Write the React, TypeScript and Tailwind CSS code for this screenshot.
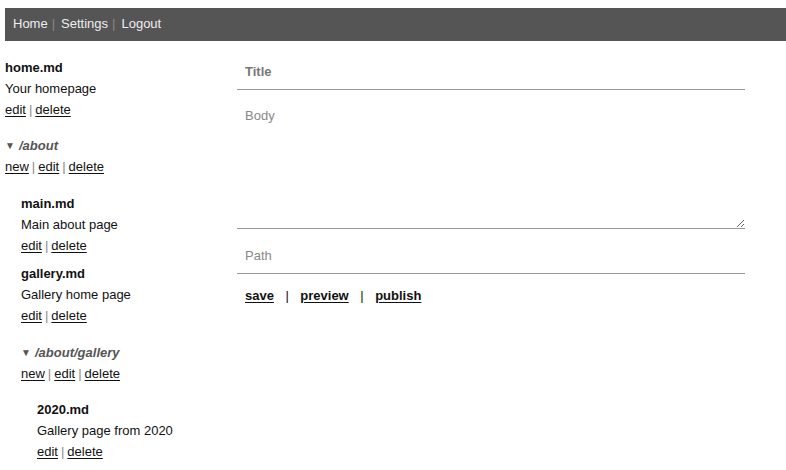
import React from "react";

type Entry =
  | { kind: "file"; name: string; desc: string }
  | { kind: "dir"; name: string; children: Entry[] };

const tree: Entry[] = [
  { kind: "file", name: "home.md", desc: "Your homepage" },
  {
    kind: "dir",
    name: "/about",
    children: [
      { kind: "file", name: "main.md", desc: "Main about page" },
      { kind: "file", name: "gallery.md", desc: "Gallery home page" },
      {
        kind: "dir",
        name: "/about/gallery",
        children: [{ kind: "file", name: "2020.md", desc: "Gallery page from 2020" }],
      },
    ],
  },
];

const Sep = () => <span className="text-[#888] mx-[3px]">|</span>;

const Links = ({ items }: { items: string[] }) => (
  <div>
    {items.map((item, i) => (
      <React.Fragment key={item}>
        {i > 0 && <Sep />}
        <a href="#" className="underline underline-offset-2 text-[#111]">
          {item}
        </a>
      </React.Fragment>
    ))}
  </div>
);

const Node = ({ entry }: { entry: Entry }) => {
  if (entry.kind === "file") {
    return (
      <div className="mb-[8px]">
        <div className="font-bold">{entry.name}</div>
        <div>{entry.desc}</div>
        <Links items={["edit", "delete"]} />
      </div>
    );
  }
  // margins collapse with the file's mb-[8px], giving a 16px gap
  return (
    <div className="mt-[16px]">
      <div className="flex items-center">
        <span className="text-[10px] text-[#555] w-[14px]">▼</span>
        <span className="font-bold italic text-[#555]">{entry.name}</span>
      </div>
      <Links items={["new", "edit", "delete"]} />
      <div className="pl-[16px] pt-[16px]">
        {entry.children.map((c) => (
          <Node key={c.name} entry={c} />
        ))}
      </div>
    </div>
  );
};

export default function App() {
  return (
    <div
      className="pt-[8px] pl-[5px] text-[13px] leading-[20.8px] text-[#111] bg-white min-h-[470px]"
      style={{ fontFamily: '"Liberation Sans", Arial, sans-serif' }}
    >
      <nav className="h-[33px] bg-[#555] flex items-center pl-[8px] text-[#eee]">
        <a href="#">Home</a>
        <span className="text-[#888] ml-[4px] mr-[6px]">|</span>
        <a href="#">Settings</a>
        <span className="text-[#888] ml-[4px] mr-[6px]">|</span>
        <a href="#">Logout</a>
      </nav>

      <div className="flex">
        <aside className="w-[232px] pt-[17px]">
          {tree.map((e) => (
            <Node key={e.name} entry={e} />
          ))}
        </aside>

        <form className="w-[508px] pt-[4px]" onSubmit={(e) => e.preventDefault()}>
          <input
            placeholder="Title"
            className="block w-full h-[37px] mt-[8px] px-[8px] border-b border-[#999] outline-none placeholder:text-[#777] placeholder:font-bold"
          />
          <textarea
            placeholder="Body"
            className="block w-full h-[131px] mt-[8px] px-[8px] pt-[10px] leading-[15px] border-b border-[#999] outline-none placeholder:text-[#888]"
          />
          <input
            placeholder="Path"
            className="block w-full h-[37px] mt-[8px] px-[8px] border-b border-[#999] outline-none placeholder:text-[#888]"
          />
          <div className="mt-[12px] pl-[8px] font-bold flex items-center">
            <a href="#" className="underline underline-offset-2">save</a>
            <span className="font-normal mx-[11.5px]">|</span>
            <a href="#" className="underline underline-offset-2">preview</a>
            <span className="font-normal mx-[11.5px]">|</span>
            <a href="#" className="underline underline-offset-2">publish</a>
          </div>
        </form>
      </div>
    </div>
  );
}
